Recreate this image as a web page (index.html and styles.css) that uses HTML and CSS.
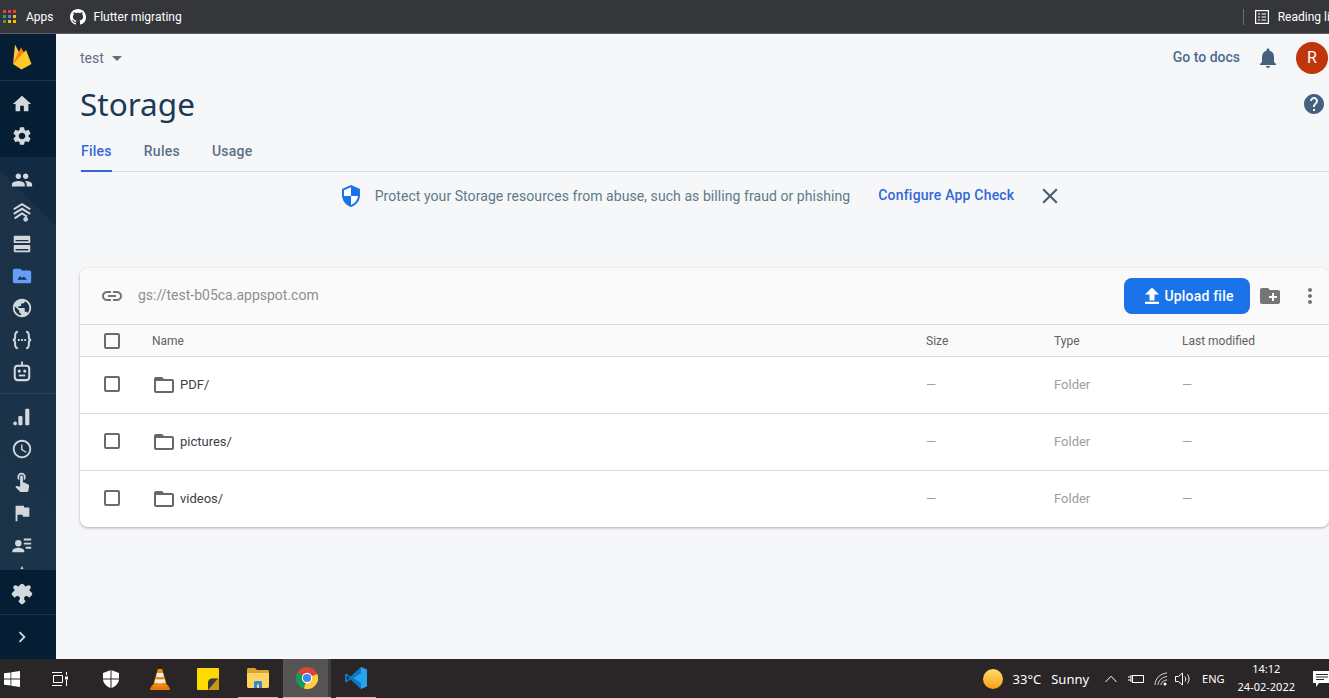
FILE: index.html
```html
<!DOCTYPE html>
<html lang="en">
<head>
  <meta charset="UTF-8" />
  <meta name="viewport" content="width=device-width, initial-scale=1.0"/>
  <title>Storage</title>
  <link rel="stylesheet" href="styles.css">
</head>
<body>
  <div class="app">
    <!-- browser bookmarks bar -->
    <div class="bookmarks">
      <div class="bookmark">
        <svg class="apps-grid" width="14" height="14" viewBox="0 0 14 14">
          <rect x="0" y="0" width="3" height="3" fill="#ea4335"/><rect x="5" y="0" width="3" height="3" fill="#ea4335"/><rect x="10" y="0" width="3" height="3" fill="#ea4335"/>
          <rect x="0" y="5" width="3" height="3" fill="#34a853"/><rect x="5" y="5" width="3" height="3" fill="#4285f4"/><rect x="10" y="5" width="3" height="3" fill="#fbbc05"/>
          <rect x="0" y="10" width="3" height="3" fill="#34a853"/><rect x="5" y="10" width="3" height="3" fill="#fbbc05"/><rect x="10" y="10" width="3" height="3" fill="#fbbc05"/>
        </svg>
        <span>Apps</span>
      </div>
      <div class="bookmark github">
        <svg width="16" height="16" viewBox="0 0 16 16" fill="#fff"><path d="M8 0C3.58 0 0 3.58 0 8c0 3.54 2.29 6.53 5.47 7.59.4.07.55-.17.55-.38 0-.19-.01-.82-.01-1.49-2.01.37-2.53-.49-2.69-.94-.09-.23-.48-.94-.82-1.13-.28-.15-.68-.52-.01-.53.63-.01 1.08.58 1.23.82.72 1.21 1.87.87 2.33.66.07-.52.28-.87.51-1.07-1.78-.2-3.64-.89-3.64-3.95 0-.87.31-1.59.82-2.15-.08-.2-.36-1.02.08-2.12 0 0 .67-.21 2.2.82.64-.18 1.32-.27 2-.27s1.36.09 2 .27c1.53-1.04 2.2-.82 2.2-.82.44 1.1.16 1.92.08 2.12.51.56.82 1.27.82 2.15 0 3.07-1.87 3.75-3.65 3.95.29.25.54.73.54 1.48 0 1.07-.01 1.93-.01 2.2 0 .21.15.46.55.38A8.01 8.01 0 0 0 16 8c0-4.42-3.58-8-8-8z"/></svg>
        <span>Flutter migrating</span>
      </div>
      <div class="reading">
        <svg width="14" height="14" viewBox="0 0 14 14" fill="none" stroke="#fff" stroke-width="1.2"><rect x="0.6" y="0.6" width="12.8" height="12.8"/><path d="M3 4h2M6.5 4h4.500M3 7h2M6.5 7h4.500M3 10h2M6.5 10h4.500"/></svg>
        <span>Reading list</span>
      </div>
    </div>

    <div class="middle">
      <nav class="sidebar">
        <div class="side-logo">
          <svg width="22" height="28" viewBox="0 0 22 28">
            <path d="M2 21 4 1.500 8.500 10z" fill="#ffc24a"/>
            <path d="M2 21 10 4.500 14.500 12z" fill="#f4820f"/>
            <path d="M2 21 15 7 20.500 21 10.500 26.500z" fill="#ffca28"/>
          </svg>
        </div>
        <div class="side-group">
          <div class="side-item"><svg viewBox="0 0 24 24"><path d="M10 20v-6h4v6h5v-8h3L12 3 2 12h3v8z"/></svg></div>
          <div class="side-item"><svg viewBox="0 0 24 24"><path d="M19.140 12.940c.04-.3.060-.61.060-.94 0-.32-.02-.64-.07-.94l2.030-1.580c.18-.14.23-.41.120-.61l-1.920-3.320c-.12-.22-.37-.29-.59-.22l-2.390.96c-.5-.38-1.030-.7-1.620-.94l-.36-2.540c-.04-.24-.24-.41-.48-.41h-3.840c-.24 0-.43.17-.47.41l-.36 2.540c-.59.24-1.130.57-1.620.94l-2.390-.96c-.22-.08-.47 0-.59.22L2.740 8.870c-.12.21-.08.47.12.61l2.030 1.580c-.05.3-.09.63-.09.94s.02.64.07.94l-2.030 1.580c-.18.14-.23.41-.12.61l1.920 3.320c.12.22.37.29.59.22l2.390-.96c.5.38 1.030.7 1.620.94l.36 2.540c.05.24.24.41.48.41h3.840c.24 0 .44-.17.47-.41l.36-2.540c.59-.24 1.130-.56 1.620-.94l2.390.96c.22.08.47 0 .59-.22l1.920-3.320c.12-.22.07-.47-.12-.61l-2.010-1.580zM12 15.600c-1.980 0-3.600-1.620-3.600-3.600s1.620-3.600 3.600-3.600 3.600 1.620 3.600 3.600-1.620 3.600-3.600 3.600z"/></svg></div>
        </div>
        <div class="side-scroll">
          <div class="side-group build">
            <div class="side-item"><svg viewBox="0 0 24 24"><path d="M16 11c1.660 0 2.990-1.340 2.990-3S17.660 5 16 5c-1.660 0-3 1.340-3 3s1.340 3 3 3zm-8 0c1.660 0 2.990-1.340 2.990-3S9.660 5 8 5C6.340 5 5 6.340 5 8s1.340 3 3 3zm0 2c-2.330 0-7 1.170-7 3.500V19h14v-2.500c0-2.330-4.670-3.500-7-3.500zm8 0c-.29 0-.62.02-.97.05 1.160.84 1.970 1.970 1.970 3.450V19h6v-2.500c0-2.330-4.670-3.500-7-3.500z"/></svg></div>
            <div class="side-item"><svg viewBox="0 0 24 24" fill="none" class="stroked"><path d="M3 9 12 3.500 21 9M3 14 12 8.500 21 14M4 19 12 13.500l5.500 3.500"/><circle cx="16" cy="20" r="1.500"/></svg></div>
            <div class="side-item"><svg viewBox="0 0 24 24"><path d="M4 3h16c.55 0 1 .45 1 1v6c0 .55-.45 1-1 1H4c-.55 0-1-.45-1-1V4c0-.55.45-1 1-1zm1 4.500v1.500h14V7.500zM4 13h16c.55 0 1 .45 1 1v6c0 .55-.45 1-1 1H4c-.55 0-1-.45-1-1v-6c0-.55.45-1 1-1zm1 4.500V19h14v-1.500z"/></svg></div>
            <div class="side-item active"><svg viewBox="0 0 24 24"><path d="M20 6h-8l-2-2H4c-1.100 0-2 .9-2 2v12c0 1.100.9 2 2 2h16c1.100 0 2-.9 2-2V8c0-1.100-.9-2-2-2z"/><path d="m7 16 3-4 2 2.500 2-2 3.500 3.500z" fill="#1a3148"/></svg></div>
            <div class="side-item"><svg viewBox="0 0 24 24"><path d="M12 2C6.480 2 2 6.480 2 12s4.480 10 10 10 10-4.480 10-10S17.520 2 12 2zm-1 17.930c-3.950-.49-7-3.850-7-7.930 0-.62.08-1.210.21-1.790L9 15v1c0 1.100.9 2 2 2v1.930zm6.900-2.540c-.26-.81-1-1.390-1.900-1.390h-1v-3c0-.55-.45-1-1-1H8v-2h2c.55 0 1-.45 1-1V7h2c1.100 0 2-.9 2-2v-.41c2.930 1.190 5 4.060 5 7.410 0 2.080-.8 3.970-2.100 5.390z"/></svg></div>
            <div class="side-item"><svg viewBox="0 0 24 24" fill="none" class="stroked"><path d="M7.500 3C5 3 4.500 5 4.500 7.500V9c0 1.500-1 3-2.500 3 1.500 0 2.500 1.500 2.500 3v1.500C4.500 19 5 21 7.500 21M16.500 3C19 3 19.500 5 19.500 7.500V9c0 1.500 1 3 2.500 3-1.500 0-2.500 1.500-2.500 3v1.500C19.500 19 19 21 16.500 21M7.500 12H9.500M11 12h2M14.500 12h2"/></svg></div>
            <div class="side-item"><svg viewBox="0 0 24 24"><path d="M11 0.500h2V4h4c2.200 0 4 1.800 4 4v10c0 2.200-1.800 4-4 4H7c-2.200 0-4-1.800-4-4V8c0-2.200 1.800-4 4-4h4zM5.200 8.500v9c0 1.200.8 2.200 2 2.200h9.600c1.200 0 2-1 2-2.200v-9c0-1.200-.8-2.200-2-2.200H7.200c-1.200 0-2 1-2 2.200z"/><circle cx="9" cy="11" r="1.700"/><circle cx="15" cy="11" r="1.700"/><rect x="8.500" y="14.800" width="7" height="2"/></svg></div>
          </div>
          <div class="side-group">
            <div class="side-item"><svg viewBox="0 0 24 24"><circle cx="4.500" cy="19" r="2"/><rect x="8" y="11" width="4.500" height="10" rx="1.200"/><rect x="15.500" y="3" width="4.500" height="18" rx="1.200"/></svg></div>
            <div class="side-item"><svg viewBox="0 0 24 24"><path d="M11.990 2C6.470 2 2 6.480 2 12s4.470 10 9.990 10C17.520 22 22 17.520 22 12S17.520 2 11.990 2zM12 20c-4.420 0-8-3.580-8-8s3.580-8 8-8 8 3.580 8 8-3.580 8-8 8zm.5-13H11v6l5.250 3.150.75-1.230-4.500-2.670z"/></svg></div>
            <div class="side-item"><svg viewBox="0 0 24 24"><path d="M9 11.240V7.500a2.500 2.500 0 0 1 5 0v3.740c1.210-.81 2-2.180 2-3.740C16 5.010 13.990 3 11.500 3S7 5.010 7 7.500c0 1.560.79 2.930 2 3.740zm9.840 4.630-4.540-2.260c-.17-.07-.35-.11-.54-.11H13v-6c0-.83-.67-1.500-1.500-1.500S10 6.670 10 7.500v10.740l-3.430-.72c-.08-.01-.15-.03-.24-.03-.31 0-.59.13-.79.33l-.79.8 4.940 4.940c.27.27.65.44 1.060.44h6.790c.75 0 1.330-.55 1.440-1.280l.75-5.270c.01-.07.02-.14.02-.2 0-.62-.38-1.160-.91-1.380z"/></svg></div>
            <div class="side-item"><svg viewBox="0 0 24 24"><path d="M14.400 6 14 4H5v17h2v-7h5.600l.4 2h7V6z"/></svg></div>
            <div class="side-item"><svg viewBox="0 0 24 24"><circle cx="8" cy="10" r="3.500"/><path d="M1.500 20v-1.500c0-2.300 4.300-3.500 6.500-3.500s6.500 1.200 6.500 3.500V20zM14 5h8v2h-8zM14 9.500h8v2h-8zM16 14h6v2h-6z"/></svg></div>
            <div class="side-item"><svg viewBox="0 0 24 24"><path d="M12 0l4 8H8z"/></svg></div>
          </div>
        </div>
        <div class="side-ext">
          <div class="side-item"><svg class="puzzle" viewBox="0 0 24 24"><path d="M20.500 11H19V7c0-1.100-.9-2-2-2h-4V3.500C13 2.120 11.880 1 10.500 1S8 2.120 8 3.500V5H4c-1.100 0-1.990.9-1.990 2v3.800H3.500c1.490 0 2.700 1.210 2.700 2.700s-1.210 2.700-2.700 2.700H2V20c0 1.100.9 2 2 2h3.800v-1.500c0-1.490 1.210-2.700 2.700-2.700 1.490 0 2.700 1.210 2.700 2.700V22H17c1.100 0 2-.9 2-2v-4h1.500c1.380 0 2.500-1.120 2.500-2.500S21.880 11 20.500 11z"/></svg></div>
        </div>
        <div class="side-collapse">
          <div class="side-item"><svg viewBox="0 0 24 24"><path d="M10 6 8.590 7.410 13.170 12l-4.580 4.590L10 18l6-6z"/></svg></div>
        </div>
      </nav>

      <main class="main">
        <div class="topline">
          <div class="project">test <span class="caret"></span></div>
          <div class="top-actions">
            <span class="docs">Go to docs</span>
            <svg class="bell" width="24" height="24" viewBox="0 0 24 24"><path d="M12 22c1.100 0 2-.9 2-2h-4c0 1.100.9 2 2 2zm6-6v-5c0-3.070-1.630-5.640-4.500-6.320V4c0-.83-.67-1.500-1.500-1.500s-1.500.67-1.500 1.500v.68C7.640 5.360 6 7.920 6 11v5l-2 2v1h16v-1l-2-2z"/></svg>
            <div class="avatar">R</div>
          </div>
        </div>

        <div class="title-row">
          <h1>Storage</h1>
          <svg class="help" width="24" height="24" viewBox="0 0 24 24"><path d="M12 2C6.480 2 2 6.480 2 12s4.480 10 10 10 10-4.480 10-10S17.520 2 12 2zm1 17h-2v-2h2v2zm2.070-7.750-.9.920C13.450 12.900 13 13.500 13 15h-2v-.5c0-1.100.45-2.100 1.170-2.830l1.240-1.260c.37-.36.59-.86.59-1.410 0-1.100-.9-2-2-2s-2 .9-2 2H8c0-2.210 1.790-4 4-4s4 1.790 4 4c0 .88-.36 1.680-.93 2.250z"/></svg>
        </div>

        <div class="tabs">
          <div class="tab current">Files</div>
          <div class="tab">Rules</div>
          <div class="tab">Usage</div>
        </div>

        <div class="notice">
          <svg width="24" height="24" viewBox="0 0 24 24"><path d="M12 1 3 5v6c0 5.550 3.840 10.740 9 12 5.160-1.260 9-6.450 9-12V5z" fill="#1a73e8"/><path d="M12 3.200v8.800H5V6.300zM12 12h7c-.5 4.100-3.300 7.800-7 8.900z" fill="#fff"/></svg>
          <span class="notice-text">Protect your Storage resources from abuse, such as billing fraud or phishing</span>
          <span class="notice-link">Configure App Check</span>
          <svg class="notice-close" width="26" height="26" viewBox="0 0 24 24"><path d="M19 6.410 17.590 5 12 10.590 6.410 5 5 6.410 10.590 12 5 17.590 6.410 19 12 13.410 17.590 19 19 17.590 13.410 12z"/></svg>
        </div>

        <section class="card">
          <div class="card-head">
            <svg class="link-icon" width="24" height="24" viewBox="0 0 24 24"><path d="M3.900 12c0-1.710 1.390-3.100 3.100-3.100h4V7H7c-2.760 0-5 2.240-5 5s2.240 5 5 5h4v-1.900H7c-1.710 0-3.100-1.390-3.100-3.100zM8 13h8v-2H8v2zm9-6h-4v1.900h4c1.710 0 3.100 1.390 3.100 3.100s-1.390 3.100-3.100 3.100h-4V17h4c2.760 0 5-2.240 5-5s-2.240-5-5-5z"/></svg>
            <span class="bucket">gs://test-b05ca.appspot.com</span>
            <button class="upload">
              <svg width="24" height="24" viewBox="0 0 24 24"><path d="M5 20h14v-2.200H5zM5 10.500h4.500V16.500h5v-6L19 10.500 12 3.500z"/></svg>
              Upload file
            </button>
            <svg class="add-folder" width="24" height="24" viewBox="0 0 24 24"><path d="M20 6h-8l-2-2H4c-1.110 0-1.990.89-1.990 2L2 18c0 1.110.89 2 2 2h16c1.110 0 2-.89 2-2V8c0-1.110-.89-2-2-2zm-1 8h-3v3h-2v-3h-3v-2h3V9h2v3h3v2z"/></svg>
            <svg class="more" width="24" height="24" viewBox="0 0 24 24"><path d="M12 8c1.100 0 2-.9 2-2s-.9-2-2-2-2 .9-2 2 .9 2 2 2zm0 2c-1.100 0-2 .9-2 2s.9 2 2 2 2-.9 2-2-.9-2-2-2zm0 6c-1.100 0-2 .9-2 2s.9 2 2 2 2-.9 2-2-.9-2-2-2z"/></svg>
          </div>

          <div class="row heading">
            <span class="check"></span>
            <span>Name</span>
            <span>Size</span>
            <span>Type</span>
            <span>Last modified</span>
          </div>

          <div class="row">
            <span class="check"></span>
            <span class="name"><svg width="24" height="24" viewBox="0 0 24 24"><path d="M20 6h-8l-2-2H4c-1.100 0-2 .9-2 2v12c0 1.100.9 2 2 2h16c1.100 0 2-.9 2-2V8c0-1.100-.9-2-2-2zm0 12H4V8h16z"/></svg>PDF/</span>
            <span class="muted">—</span>
            <span class="muted">Folder</span>
            <span class="muted">—</span>
          </div>
          <div class="row">
            <span class="check"></span>
            <span class="name"><svg width="24" height="24" viewBox="0 0 24 24"><path d="M20 6h-8l-2-2H4c-1.100 0-2 .9-2 2v12c0 1.100.9 2 2 2h16c1.100 0 2-.9 2-2V8c0-1.100-.9-2-2-2zm0 12H4V8h16z"/></svg>pictures/</span>
            <span class="muted">—</span>
            <span class="muted">Folder</span>
            <span class="muted">—</span>
          </div>
          <div class="row">
            <span class="check"></span>
            <span class="name"><svg width="24" height="24" viewBox="0 0 24 24"><path d="M20 6h-8l-2-2H4c-1.100 0-2 .9-2 2v12c0 1.100.9 2 2 2h16c1.100 0 2-.9 2-2V8c0-1.100-.9-2-2-2zm0 12H4V8h16z"/></svg>videos/</span>
            <span class="muted">—</span>
            <span class="muted">Folder</span>
            <span class="muted">—</span>
          </div>
        </section>
      </main>
    </div>

    <!-- windows taskbar -->
    <footer class="taskbar">
      <div class="task start"><svg width="16" height="16" viewBox="0 0 16 16" fill="#fff"><path d="M0 2.300 6.500 1.400v6.200H0zM7.300 1.300 16 0v7.600H7.300zM0 8.400h6.500v6.200L0 13.700zM7.300 8.400H16V16l-8.700-1.300z"/></svg></div>
      <div class="task view"><svg width="16" height="16" viewBox="0 0 16 16" fill="none" stroke="#fff"><path d="M0 1.500h10M0 14.500h10M1.500 4.500h9v7h-9z"/><path d="M14.500 1v3M14.500 9v6"/><rect x="13" y="5.500" width="3" height="3" fill="#fff" stroke="none"/></svg></div>
      <div class="task shield"><svg width="18" height="18" viewBox="0 0 18 18"><path d="M9 0 1 3v6c0 4 3.500 7.800 8 9 4.500-1.200 8-5 8-9V3z" fill="#fff"/><path d="M8.500 0h1v18h-1zM1 8.500h16v1H1z" fill="#2a2627"/></svg></div>
      <div class="task vlc"><svg width="20" height="22" viewBox="0 0 20 22"><path d="M2 17h16l2 4c0 .6-.5 1-1 1H1c-.5 0-1-.4-1-1z" fill="#e8760e"/><path d="M7.800 1h4.400l5 17c-1.500 1.300-12.900 1.300-14.400 0z" fill="#f08a12"/><path d="M7.100 5h5.800l1 3.500c-2 .7-5.800.7-7.800 0zM5.500 11c2.500.8 6.500.8 9 0l1 3.500c-2.800 1-8.200 1-11 0z" fill="#f1f1f1"/></svg></div>
      <div class="task sticky"><svg width="22" height="22" viewBox="0 0 22 22"><rect width="22" height="22" rx="1" fill="#fedb00"/><path d="M22 10.500V21a1 1 0 0 1-1 1H11V17c0-3.500 2-6.500 6-6.500z" fill="#c99a0a"/><path d="M11 22v-7c0-2.500 1.500-4.500 4-4.500L21 10.500 11 22z" fill="#3a3a3a"/></svg></div>
      <div class="task explorer open"><svg width="22" height="20" viewBox="0 0 22 20"><path d="M0 1.500C0 .7.700 0 1.500 0H8l2 2h10.500c.8 0 1.500.7 1.500 1.500V6H0z" fill="#d9a52e"/><path d="M0 5h22v13.500c0 .8-.7 1.500-1.500 1.500h-19C.7 20 0 19.300 0 18.500z" fill="#fcd462"/><path d="M7 20v-5.500c0-.8.7-1.500 1.500-1.500h5c.8 0 1.500.7 1.500 1.500V20h-3v-3.500h-2V20z" fill="#2e8ad8"/></svg></div>
      <div class="task chrome open"><svg width="22" height="22" viewBox="0 0 22 22"><circle cx="11" cy="11" r="11" fill="#db4437"/><path d="M11 11 1.500 5.500A11 11 0 0 0 8 21.600z" fill="#0f9d58"/><path d="M11 11l10.300-4A11 11 0 0 1 8 21.600z" fill="#ffcd40"/><circle cx="11" cy="11" r="5.200" fill="#fff"/><circle cx="11" cy="11" r="4.100" fill="#4285f4"/></svg></div>
      <div class="task vscode open"><svg width="24" height="24" viewBox="0 0 24 24"><path d="M17 1 6.500 10.500 2.500 7.500 1 8.300v7.400l1.500.8 4-3L17 23z" fill="#0e78c4"/><path d="M17 1 23 3.500v17L17 23zM17 7l-7.500 5 7.500 5z" fill="#28a3ee"/><path d="M3 9.500 5.500 12 3 14.500z" fill="#2a2627"/></svg></div>

      <div class="tray">
        <span class="sun"></span>
        <span class="weather">33°C</span>
        <span class="weather sunny">Sunny</span>
        <svg class="tray-up" width="12" height="8" viewBox="0 0 12 8" fill="none" stroke="#fff"><path d="M.5 7 6 1.200 11.500 7"/></svg>
        <svg class="tray-power" width="16" height="12" viewBox="0 0 16 12" fill="none" stroke="#fff"><rect x="4.500" y="2.500" width="11" height="7"/><path d="M0 4h3M0 7h3M3 2v7"/></svg>
        <svg class="tray-wifi" width="14" height="14" viewBox="0 0 14 14" fill="none" stroke="#ddd"><path d="M1 13C1 7 6 1.500 13 1M4 13c0-4 4-8 9-8.500M7 13c0-2.500 3-5 6-5"/><circle cx="11" cy="12" r="1.500" fill="#fff" stroke="none"/></svg>
        <svg class="tray-sound" width="16" height="14" viewBox="0 0 16 14" fill="none" stroke="#fff"><path d="M.5 4.500h3L7.500 1v12l-4-3.500h-3z"/><path d="M10 4.500c1 1.500 1 3.500 0 5M12.500 2.500c2 2.500 2 6.500 0 9"/></svg>
        <span class="lang">ENG</span>
        <div class="clock"><span>14:12</span><span>24-02-2022</span></div>
        <svg class="tray-note" width="18" height="16" viewBox="0 0 18 16"><path d="M0 0h18v12H6l-3 4v-4H0z" fill="#fff"/><path d="M3 3.500h12M3 6h12M3 8.500h8" stroke="#2a2627"/></svg>
      </div>
    </footer>
  </div>
</body>
</html>
```

FILE: styles.css
```css
* {
  margin: 0;
  padding: 0;
  box-sizing: border-box;
}

body {
  font-family: Roboto, 'Liberation Sans', sans-serif;
  overflow: hidden;
}

.app {
  display: flex;
  flex-direction: column;
  height: 100vh;
}

/* bookmarks bar */
.bookmarks {
  display: flex;
  align-items: center;
  height: 34px;
  flex: none;
  background-color: #35363a;
  border-bottom: 1px solid #5f6064;
  color: #fff;
  font-size: 12px;
  overflow: hidden;
  white-space: nowrap;
}

.bookmark {
  display: flex;
  align-items: center;
  gap: 9px;
  padding-left: 3px;
}

.github {
  gap: 8px;
  padding-left: 16px;
}

.reading {
  display: flex;
  align-items: center;
  gap: 9px;
  margin-left: auto;
  margin-right: -11px;
  padding-left: 11px;
  border-left: 1px solid #6d6e72;
  height: 16px;
}

/* page */
.middle {
  display: flex;
  flex: 1;
  min-height: 0;
}

.sidebar {
  display: flex;
  flex-direction: column;
  width: 56px;
  flex: none;
  background-color: #051e34;
  color: #d3d8dd;
}

.side-logo {
  display: flex;
  align-items: center;
  padding-left: 11px;
  height: 47px;
  border-bottom: 1px solid #1c3349;
}

.side-group {
  padding: 7px 0 5px;
}

.side-scroll {
  flex: none;
  height: 412px;
  overflow: hidden;
  background: linear-gradient(45deg, #1c3449 0, #1a3148 282px, #122b43 282px);
}

.build {
  height: 237px;
  border-bottom: 1px solid #2c4459;
}

.side-scroll .side-group:last-child {
  padding-top: 7px;
}

.side-item {
  display: flex;
  align-items: center;
  justify-content: center;
  height: 32px;
  padding-right: 12px;
}

.side-item svg {
  width: 22px;
  height: 22px;
  fill: #d3d8dd;
}

.side-item svg.stroked {
  fill: none;
  stroke: #d3d8dd;
  stroke-width: 2.2;
}

.side-item.active svg {
  fill: #669df6;
}

.puzzle {
  transform: rotate(-45deg);
}

.side-ext {
  height: 46px;
  padding-top: 6px;
  border-top: 1px solid #1c3349;
  border-bottom: 1px solid #1c3349;
}

.side-collapse {
  flex: 1;
  padding-top: 6px;
}

.main {
  flex: 1;
  min-width: 0;
  background-color: #f6f7f9;
  padding-left: 24px;
  overflow: hidden;
}

.topline {
  display: flex;
  align-items: center;
  justify-content: space-between;
  height: 47px;
}

.project {
  display: flex;
  align-items: center;
  gap: 8px;
  font-size: 14px;
  color: #5c6f87;
}

.caret {
  width: 0;
  height: 0;
  border-left: 5.5px solid transparent;
  border-right: 5.5px solid transparent;
  border-top: 5.5px solid #5c6f87;
  margin-top: 2px;
}

.top-actions {
  display: flex;
  align-items: center;
}

.docs {
  font-size: 14px;
  font-weight: 500;
  color: #4f6a8c;
  margin-right: 16px;
  margin-bottom: 2px;
}

.bell {
  fill: #46617f;
  margin-right: 16px;
}

.avatar {
  display: flex;
  align-items: center;
  justify-content: center;
  width: 32px;
  height: 32px;
  border-radius: 50%;
  background-color: #bf360c;
  color: #fff;
  font-size: 16px;
  margin-right: 1px;
}

.title-row {
  display: flex;
  align-items: center;
  justify-content: space-between;
  height: 48px;
  padding-right: 3px;
}

h1 {
  font-family: 'Noto Sans', sans-serif;
  font-size: 31.5px;
  font-weight: 400;
  color: #1c3a57;
  margin-bottom: 3px;
}

.help {
  fill: #46617f;
  margin-bottom: 2px;
}

.tabs {
  display: flex;
  gap: 32px;
  height: 43px;
  padding-left: 1px;
  border-bottom: 1px solid #d9dce0;
}

.tab {
  height: 43px;
  padding-top: 14px;
  font-size: 14px;
  font-weight: 500;
  letter-spacing: 0.25px;
  color: #5c6f87;
}

.tab.current {
  color: #3367d6;
  border-bottom: 2px solid #3367d6;
}

.notice {
  display: flex;
  align-items: center;
  justify-content: center;
  height: 48px;
  margin-bottom: 48px;
  padding-right: 7px;
}

.notice-text {
  font-size: 14px;
  letter-spacing: 0.066px;
  color: #5f7a87;
  margin-left: 12px;
}

.notice-link {
  font-size: 14px;
  font-weight: 500;
  letter-spacing: 0.2px;
  color: #3367d6;
  margin-left: 28px;
  margin-bottom: 2px;
}

.notice-close {
  fill: #4a5f72;
  margin-left: 23px;
}

.card {
  background-color: #fff;
  border-radius: 8px;
  box-shadow: 0 1px 3px rgba(0, 0, 0, 0.3);
  overflow: hidden;
}

.card-head {
  display: flex;
  align-items: center;
  height: 57px;
  padding: 0 7px 0 20px;
  background-color: #fafafa;
  border-bottom: 1px solid #dcdcdc;
}

.link-icon {
  fill: #757575;
}

.bucket {
  flex: 1;
  margin-left: 14px;
  margin-bottom: 2px;
  font-size: 14px;
  color: #8f8f8f;
}

.upload {
  display: flex;
  align-items: center;
  justify-content: center;
  width: 126px;
  height: 36px;
  border: none;
  border-radius: 8px;
  background-color: #1a73e8;
  color: #fff;
  font-family: inherit;
  font-size: 14px;
  font-weight: 500;
  letter-spacing: 0.2px;
}

.upload svg {
  fill: #fff;
}

.add-folder {
  fill: #757575;
  margin-left: 8px;
}

.more {
  fill: #757575;
  margin-left: 16px;
}

.row {
  display: grid;
  grid-template-columns: 72px 774px 128px 128px 1fr;
  align-items: center;
  height: 57px;
  padding-bottom: 1px;
  font-size: 12px;
  color: #3c4043;
  border-bottom: 1px solid #dcdcdc;
}

.row:last-child {
  height: 56px;
  border-bottom: none;
}

.row.heading {
  height: 32px;
  padding-bottom: 0;
  background-color: #fafafa;
  color: #616161;
}

.check {
  display: block;
  width: 16px;
  height: 16px;
  margin-left: 24px;
  margin-bottom: 1px;
  border: 2px solid #6b6b6b;
  border-radius: 2px;
}

.row.heading .check {
  margin-bottom: 0;
}

.name {
  display: flex;
  align-items: center;
  gap: 4px;
  font-size: 13px;
}

.name svg {
  fill: #6d6466;
}

.muted {
  font-size: 13px;
  color: #9e9e9e;
}

/* taskbar */
.taskbar {
  display: flex;
  align-items: stretch;
  height: 39px;
  flex: none;
  background-color: #2a2627;
  color: #fff;
  font-family: 'Noto Sans', sans-serif;
}

.task {
  display: flex;
  align-items: center;
  justify-content: center;
  width: 48px;
  height: 39px;
  flex: none;
}

.start {
  width: 24px;
  margin-right: 24px;
}

.view {
  width: 24px;
  margin-right: 24px;
}

.shield {
  width: 30px;
  margin-right: 10px;
}

.sticky {
  margin-right: 1px;
}

.open {
  border-bottom: 1px solid #f0a8a0;
}

.explorer {
  width: 40px;
  margin-left: 5px;
  margin-right: 5px;
}

.chrome {
  background: linear-gradient(90deg, #565453 45px, #3f3c3c 45px);
}

.vscode {
  width: 40px;
  margin-left: 5px;
}

.tray {
  display: flex;
  align-items: center;
  margin-left: auto;
  margin-right: -2px;
  font-size: 13px;
}

.sun {
  width: 20px;
  height: 20px;
  border-radius: 50%;
  background: linear-gradient(#fedc6a, #fb9e14);
}

.weather {
  margin-left: 10px;
}

.sunny {
  margin-right: 16px;
}

.tray-power {
  margin-left: 11px;
}

.tray-wifi {
  margin-left: 10px;
}

.tray-sound {
  margin-left: 7px;
}

.lang {
  margin-left: 11px;
  font-size: 11px;
}

.clock {
  display: flex;
  flex-direction: column;
  align-items: center;
  gap: 3px;
  margin-left: 13px;
  margin-bottom: 2px;
  font-size: 11px;
}

.tray-note {
  margin-left: 18px;
}
```
